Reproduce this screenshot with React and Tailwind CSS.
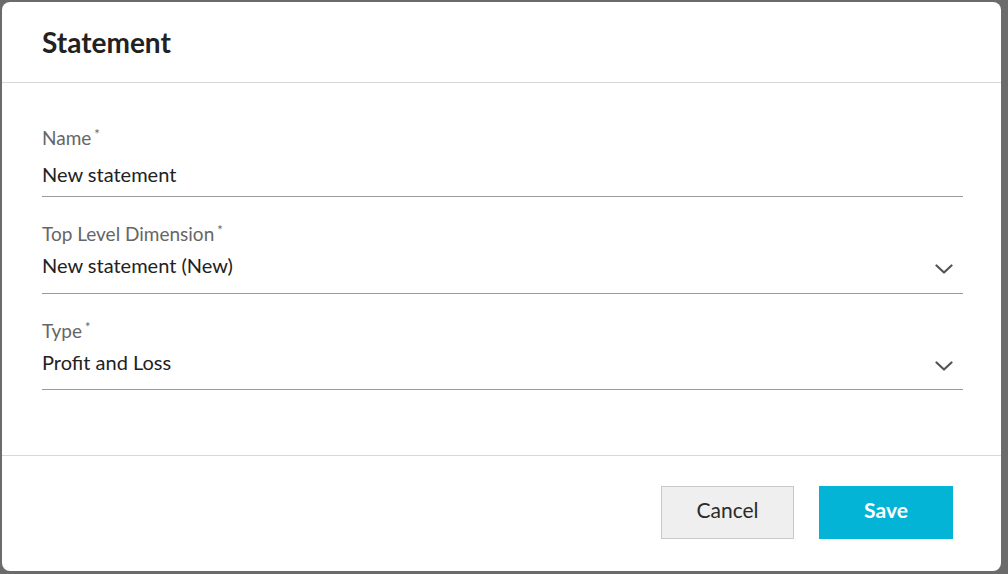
function Chevron() {
  return (
    <svg width="18" height="10" viewBox="0 0 18 10" fill="none" className="shrink-0">
      <path d="M1.5 1.5 L9 8.5 L16.5 1.5" stroke="#555" strokeWidth="2.2" strokeLinecap="round" strokeLinejoin="round" />
    </svg>
  );
}

function Field({ label, value, select, gap, pb, className = "" }) {
  return (
    <div className={`border-b border-[#9a9a9a] ${pb} ${className}`}>
      <div className="text-[19px] leading-6 text-[#666]">
        {label}
        <span className="ml-[3px] align-top text-[13px] leading-4">*</span>
      </div>
      <div className={`flex items-center justify-between ${gap}`}>
        <span className="text-[20px] leading-6 text-[#222]">{value}</span>
        {select && (
          <span className="mr-[10px] mt-[8px]">
            <Chevron />
          </span>
        )}
      </div>
    </div>
  );
}

export default function App() {
  return (
    <div
      className="h-screen w-full bg-[#6b6b6b] pl-[2px] pt-[2px]"
      style={{ fontFamily: "Lato, 'Open Sans', sans-serif" }}
    >
      <div className="flex h-[569px] w-[999px] flex-col rounded-lg bg-white">
        {/* Header */}
        <div className="flex h-[81px] items-center border-b border-[#d8d8d8] px-10">
          <h1 className="text-[28px] font-bold text-[#222]">Statement</h1>
        </div>

        {/* Body */}
        <div className="flex-1 pl-10 pr-[38px] pt-[43px]">
          <Field label="Name" value="New statement" gap="mt-[12px]" pb="pb-[10px]" />
          <Field
            label="Top Level Dimension"
            value="New statement (New)"
            select
            gap="mt-[7px]"
            pb="pb-[16px]"
            className="mt-[25px]"
          />
          <Field
            label="Type"
            value="Profit and Loss"
            select
            gap="mt-[7px]"
            pb="pb-[15px]"
            className="mt-[25px]"
          />
        </div>

        {/* Footer */}
        <div className="flex justify-end gap-[25px] border-t border-[#d8d8d8] pb-8 pr-12 pt-[30px]">
          <button className="h-[53px] w-[133px] border border-[#c8c8c8] bg-[#efefef] pb-[5px] text-[21px] text-[#2a2a2a]">
            Cancel
          </button>
          <button className="h-[53px] w-[134px] bg-[#03b4d6] pb-[5px] text-[21px] font-bold text-white">
            Save
          </button>
        </div>
      </div>
    </div>
  );
}
